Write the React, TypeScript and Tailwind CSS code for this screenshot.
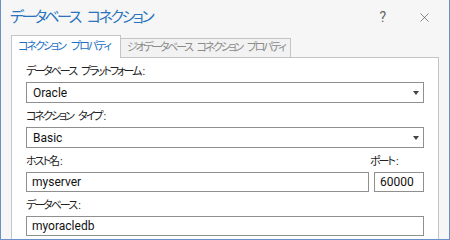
import { X } from 'lucide-react';

const font = "[font-family:'Roboto','Noto_Sans_CJK_JP',sans-serif] [font-feature-settings:'palt']";

// narrow Japanese text: words split on spaces, tight kana, normal colon
const Jp = ({ text, gap = 'gap-[6px]' }: { text: string; gap?: string }) => {
  const colon = text.endsWith(':');
  const body = colon ? text.slice(0, -1) : text;
  return (
    <span className={`inline-flex whitespace-nowrap ${gap}`}>
      {body.split(' ').map((w, i) => (
        <span key={i}>{w}</span>
      ))}
      {colon && <span className="-ml-[3px] tracking-normal">:</span>}
    </span>
  );
};

const Arrow = () => (
  <svg width="6" height="4" viewBox="0 0 6 4" className="shrink-0">
    <path d="M0 0H6L3 4Z" fill="#444" />
  </svg>
);

const Select = ({ value }: { value: string }) => (
  <div className="flex h-[21px] items-center justify-between border border-[#8f8f8f] bg-white pl-[6px] pr-[4px]">
    <span className="text-[12px] text-[#111]">{value}</span>
    <Arrow />
  </div>
);

const Input = ({ value }: { value: string }) => (
  <div className="flex h-[20px] items-center border border-[#8f8f8f] bg-white px-[5px]">
    <span className="text-[12px] text-[#111]">{value}</span>
  </div>
);

const Label = ({ text, className = '' }: { text: string; className?: string }) => (
  <div className={`h-[24px] pt-[6px] text-[11px] leading-[16px] tracking-[-2px] text-[#222] ${className}`}>
    <Jp text={text} gap="gap-[5px]" />
  </div>
);

export default function App() {
  return (
    <div className={`flex h-[240px] w-[450px] flex-col overflow-hidden border-x border-b border-[#6b8fc8] bg-[#f5f6f5] ${font}`}>
      {/* title bar */}
      <div className="flex h-[35px] shrink-0 items-center pl-[9px] pr-[17px]">
        <span className="flex-1 text-[15px] tracking-[-2.5px] text-[#2a73bd]">
          <Jp text="データベース コネクション" gap="gap-[7px]" />
        </span>
        <span className="mr-[31px] text-[14px] text-[#666]">?</span>
        <X className="h-[15px] w-[15px] text-[#555]" strokeWidth={1.1} />
      </div>

      {/* tabs */}
      <div className="flex h-[22px] shrink-0 items-end pl-[10px]">
        <div className="relative z-10 -mb-px flex h-[23px] items-center border border-b-0 border-[#c4c4c4] bg-white pl-[6px] pr-[10px] text-[11px] tracking-[-2px] text-[#1c6fc2]">
          <Jp text="コネクション プロパティ" />
        </div>
        <div className="flex h-[19px] items-center border border-b-0 border-l-0 border-[#c4c4c4] bg-[#f2f2f2] pl-[6px] pr-[6px] text-[11px] tracking-[-2.3px] text-[#8a8a8a]">
          <Jp text="ジオデータベース コネクション プロパティ" gap="gap-[5px]" />
        </div>
      </div>

      {/* panel */}
      <div className="ml-[10px] mr-[10px] flex-1 border border-b-0 border-[#c4c4c4] bg-white px-[14px]">
        <Label text="データベース プラットフォーム:" />
        <Select value="Oracle" />
        <Label text="コネクション タイプ:" />
        <Select value="Basic" />
        <div className="flex gap-[5px]">
          <div className="flex-1">
            <Label text="ホスト名:" />
            <Input value="myserver" />
          </div>
          <div className="w-[50px]">
            <Label text="ポート:" className="-ml-[4px]" />
            <Input value="60000" />
          </div>
        </div>
        <Label text="データベース:" className="h-[22px] pt-[4px]" />
        <Input value="myoracledb" />
      </div>
    </div>
  );
}
